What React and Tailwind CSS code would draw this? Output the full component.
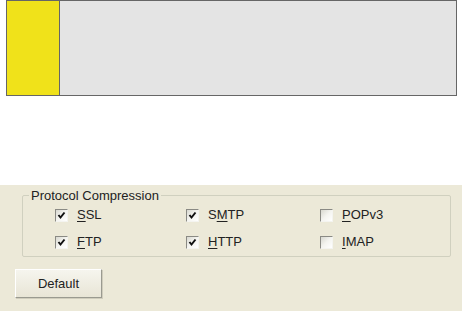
import React from 'react';

const Check = ({ checked }) => (
  <span className="relative inline-flex w-[13px] h-[13px] border border-t-[#8a8a84] border-l-[#8a8a84] border-r-[#f4f4f0] border-b-[#f4f4f0] bg-gradient-to-br from-[#d8d8d0] via-[#f4f4f0] to-white items-center justify-center">
    {checked && (
      <svg width="9" height="9" viewBox="0 0 9 9">
        <path d="M1.5 4 L3.5 6.5 L7.5 1.5" fill="none" stroke="#111" strokeWidth="2" />
      </svg>
    )}
  </span>
);

const Option = ({ checked, hot, rest, pre = '' }) => (
  <div className="flex items-center h-[24px]">
    <Check checked={checked} />
    <span className="ml-[9px] text-[13px] text-[#222]">
      {pre}
      <span className="underline underline-offset-[2px]">{hot}</span>
      {rest}
    </span>
  </div>
);

export default function App() {
  return (
    <div className="w-[462px] h-[311px] bg-white flex flex-col overflow-hidden" style={{ fontFamily: '"Liberation Sans", Arial, sans-serif' }}>
      {/* Top preview box */}
      <div className="ml-[6px] w-[451px] h-[96px] border border-[#666] flex">
        <div className="w-[53px] bg-[#F0E21A] border-r border-[#666]" />
        <div className="flex-1 bg-[#E4E4E4]" />
      </div>

      <div className="h-[89px]" />

      {/* Dialog area */}
      <div className="flex-1 bg-[#ECE9D8] flex flex-col">
        <fieldset className="mt-[3px] ml-[22px] w-[429px] border border-[#D0D0BF] rounded-[2px] pb-[2px]">
          <legend className="ml-[6px] px-[2px] text-[13px] leading-[15px] text-[#222]">Protocol Compression</legend>
          <div className="pl-[32px] grid grid-cols-[131px_134px_1fr] gap-y-[3px]">
            <Option checked hot="S" rest="SL" />
            <Option checked pre="S" hot="M" rest="TP" />
            <Option hot="P" rest="OPv3" />
            <Option checked hot="F" rest="TP" />
            <Option checked hot="H" rest="TTP" />
            <Option hot="I" rest="MAP" />
          </div>
        </fieldset>

        <button className="mt-[12px] ml-[15px] w-[87px] h-[29px] bg-gradient-to-b from-[#f6f5ee] to-[#e8e5d6] border border-t-white border-l-white border-r-[#9a9a90] border-b-[#9a9a90] shadow-[1px_1px_0_#d0cdbd] text-[13px] text-[#222]">
          Default
        </button>
      </div>
    </div>
  );
}
